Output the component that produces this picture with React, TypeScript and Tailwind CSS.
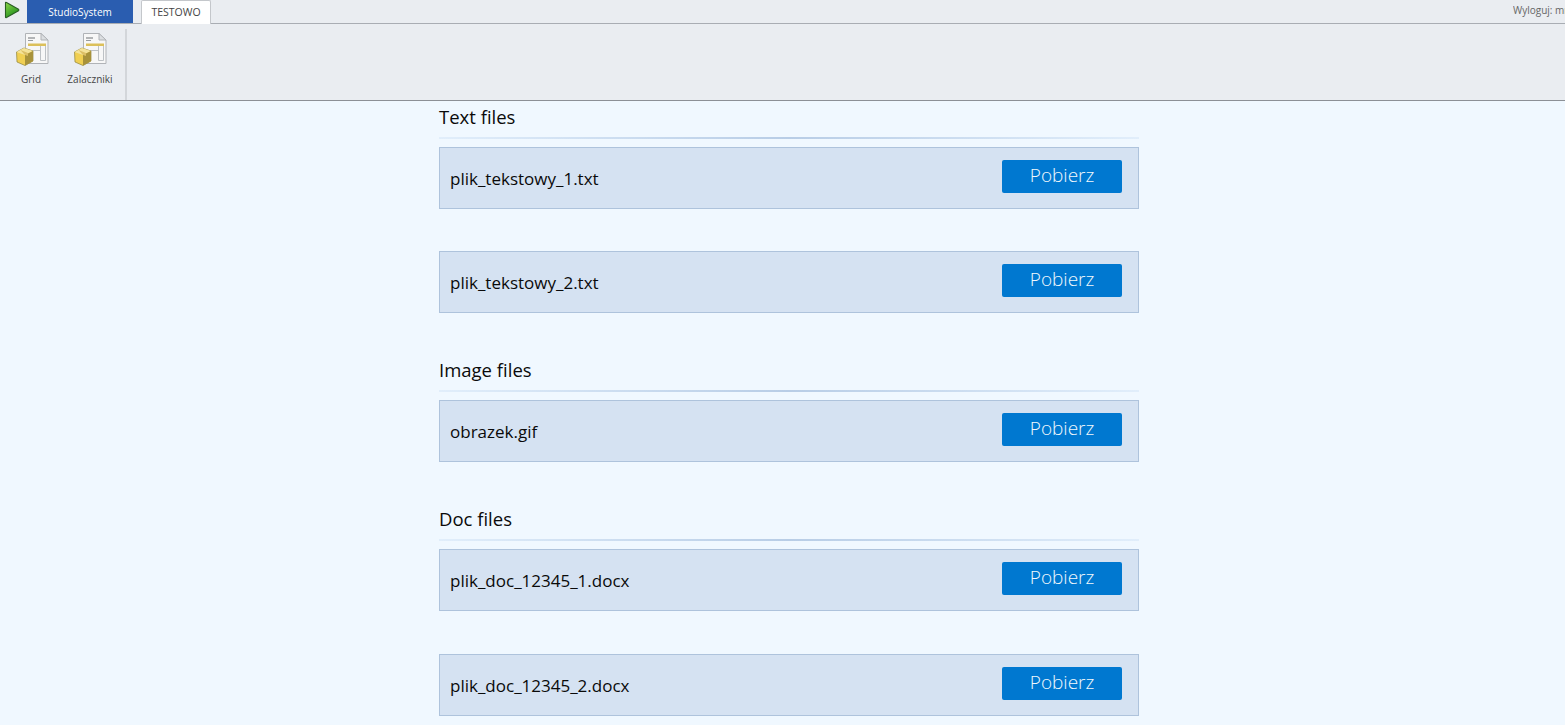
const ui = '"Open Sans", "Noto Sans", sans-serif';

function PlayIcon() {
  return (
    <svg width="16" height="18" viewBox="0 0 16 18" className="block">
      <defs>
        <linearGradient id="pl" x1="0" y1="0" x2="0.6" y2="1">
          <stop offset="0" stopColor="#8ed84a" />
          <stop offset="1" stopColor="#1f8f1c" />
        </linearGradient>
      </defs>
      <path d="M1.5 1.5 Q1.5 1 2.5 1.5 L14.5 8.2 Q15.2 9 14.5 9.8 L2.5 16.5 Q1.5 17 1.5 16 Z" fill="url(#pl)" stroke="#2a5e24" strokeWidth="1.1" strokeLinejoin="round" />
    </svg>
  );
}

function DocBoxIcon() {
  return (
    <svg width="33" height="34" viewBox="0 0 33 34" className="block">
      <path d="M9.5 1.5 H25 L32 8 V31.5 H9.5 Z" fill="#f7f7f7" stroke="#b0b3b7" />
      <path d="M25 1.5 V8 H32 Z" fill="#dcdfe2" stroke="#b0b3b7" />
      <rect x="12" y="5.5" width="7" height="1" fill="#6e7277" />
      <rect x="12" y="8" width="5" height="1" fill="#989ca0" />
      <rect x="12" y="11.5" width="18" height="2.5" fill="#dcc05a" />
      <path d="M24.5 14 V28.5 H29.5 V14 M12 18.5 H24.5" fill="none" stroke="#bdc1c5" />
      <path d="M0.5 20 L8 16 L17 19 V29 L9 33.5 L1 30 Z" fill="#f0cf52" stroke="#8e8238" strokeWidth="0.7" />
      <path d="M0.5 20 L8 16 L17 19 L9 23 Z" fill="#f4e39a" />
      <path d="M9 23 L17 19 V29 L9 33.5 Z" fill="#a8923a" />
      <path d="M4.5 18 L12 21 V24 L9 23 Z" fill="#dcbf66" />
    </svg>
  );
}

function RibbonItem({ label, w, shift }: { label: string; w: string; shift: string }) {
  return (
    <div className={`flex flex-col items-center ${w}`}>
      <div className={shift}><DocBoxIcon /></div>
      <div className="mt-[7px] text-[10px] leading-[13px] text-[#444]">{label}</div>
    </div>
  );
}

function FileRow({ name, className = "" }: { name: string; className?: string }) {
  return (
    <div className={`flex h-[62px] items-center justify-between border border-[#aec3dc] bg-[#d5e2f2] pl-[10px] pr-[16px] ${className}`}>
      <span className="pt-[1px] text-[17px] leading-6 text-[#0a0a0a]">{name}</span>
      <button className="mb-[4px] h-[33px] w-[120px] rounded-[2px] bg-[#0078d0] pb-[3px] text-[19px] font-light leading-[26px] text-[#f2f8fd]">
        Pobierz
      </button>
    </div>
  );
}

function Section({ title, children, className = "" }: { title: string; children: React.ReactNode; className?: string }) {
  return (
    <section className={className}>
      <h2 className="h-[36px] pt-[3px] text-[18.5px] leading-[26px] text-[#0a0a0a]">{title}</h2>
      <div className="h-[2px] bg-gradient-to-r from-[#e1eefb] via-[#b8cde6] to-[#e1eefb]" />
      <div className="mt-[8px]">{children}</div>
    </section>
  );
}

export default function App() {
  return (
    <div className="h-[725px] w-full overflow-hidden bg-[#f0f8ff]" style={{ fontFamily: ui }}>
      <header className="flex h-[24px] items-stretch border-b border-[#a9adb3] bg-[#eaedf1]">
        <div className="w-[27px] pl-[4px] pt-[1px]"><PlayIcon /></div>
        <div className="flex h-[23px] w-[106px] items-center justify-center bg-[#2a5db0] pt-[1px] text-[10px] text-white">StudioSystem</div>
        <div className="ml-[8px] flex h-[24px] w-[70px] items-center justify-center rounded-t-[2px] border border-b-0 border-[#c4c7cb] bg-white pt-[1px] text-[10.5px] text-[#444]">TESTOWO</div>
        <div className="ml-auto w-[52px] overflow-hidden whitespace-nowrap pt-[3px] text-[10px] leading-[14px] text-[#666]">Wyloguj: mm</div>
      </header>
      <div className="flex h-[77px] border-b border-[#8c9096] bg-[#eaedf1]">
        <div className="flex w-[125px] gap-[1px] pl-[3px] pt-[8px]">
          <RibbonItem label="Grid" w="w-[56px]" shift="ml-[3px]" />
          <RibbonItem label="Zalaczniki" w="w-[60px]" shift="ml-0" />
        </div>
        <div className="mt-[5px] h-[71px] w-[2px] bg-[#d3d6da]" />
      </div>
      <main className="ml-[439px] w-[700px]">
        <Section title="Text files">
          <FileRow name="plik_tekstowy_1.txt" />
          <FileRow name="plik_tekstowy_2.txt" className="mt-[42px]" />
        </Section>
        <Section title="Image files" className="mt-[41px]">
          <FileRow name="obrazek.gif" />
        </Section>
        <Section title="Doc files" className="mt-[41px]">
          <FileRow name="plik_doc_12345_1.docx" />
          <FileRow name="plik_doc_12345_2.docx" className="mt-[43px]" />
        </Section>
      </main>
    </div>
  );
}
